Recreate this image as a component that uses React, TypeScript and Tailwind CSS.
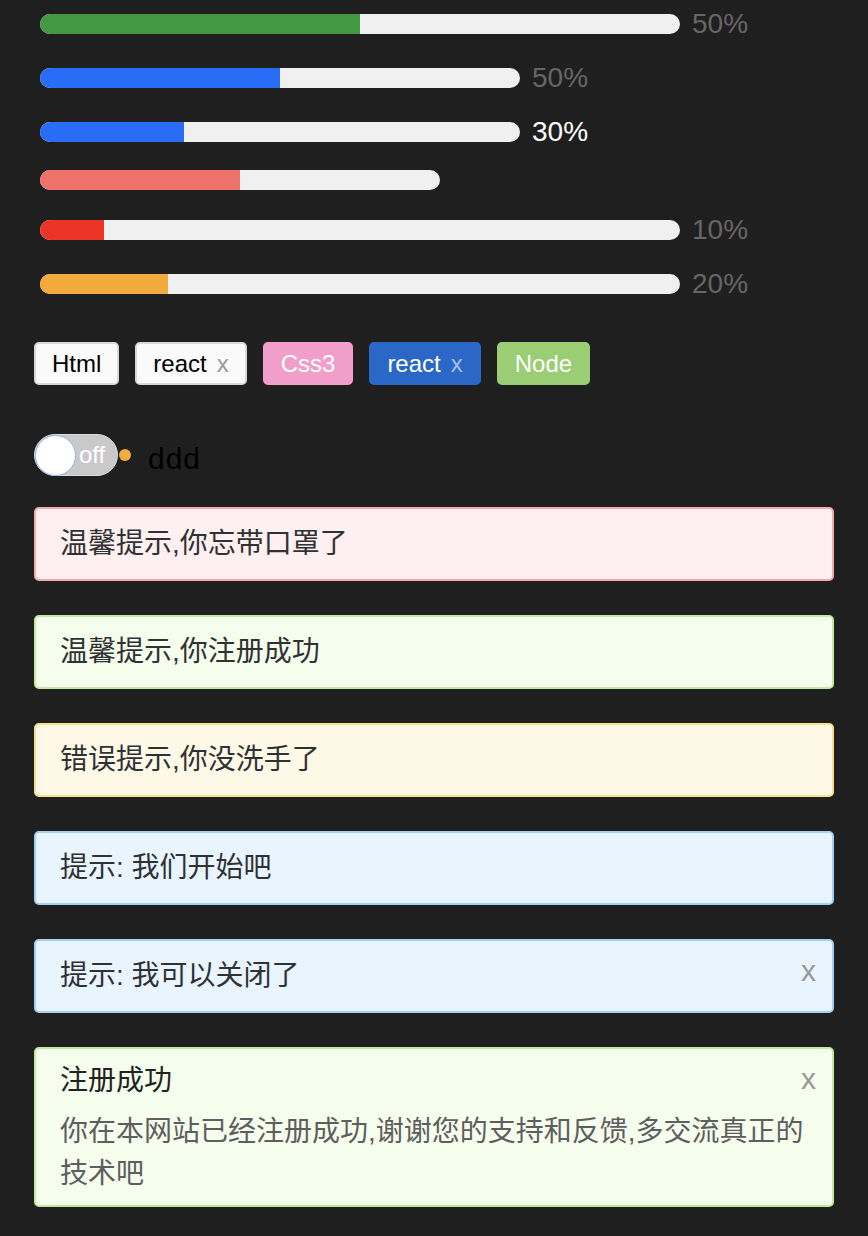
import React from 'react';

const font = { fontFamily: '"Liberation Sans", "Noto Sans CJK SC", sans-serif' };

function Bar({ width, percent, color, label, labelClass, className }: {
  width: string,
  percent: string,
  color: string,
  label?: string,
  labelClass?: string,
  className?: string
}) {
  return (
    <div className={`flex items-center h-[34px] ${className ?? ''}`}>
      <div className={`h-[20px] rounded-full bg-[#f0f0f0] overflow-hidden ${width}`}>
        <div className={`h-full ${percent} ${color}`} />
      </div>
      {label && <span className={`ml-[12px] text-[28px] leading-[34px] ${labelClass ?? 'text-[#666666]'}`}>{label}</span>}
    </div>
  );
}

function Alert({ text, tone, closable }: { text: string, tone: string, closable?: boolean }) {
  return (
    <div className={`relative border-2 rounded-[5px] pl-[24px] pr-[50px] py-[16px] text-[28px] leading-[38px] text-[#303133] ${tone}`}>
      {text}
      {closable && <span className="absolute right-[16px] top-[13px] text-[30px] leading-[34px] text-[#999999]">x</span>}
    </div>
  );
}

export default function App() {
  return (
    <div className="min-h-[1236px] bg-[#1f1f1f] pl-[34px] pr-[34px] pt-[7px] pb-[30px]" style={font}>
      {/* progress bars */}
      <div className="pl-[6px]">
        <Bar width="w-[640px]" percent="w-1/2" color="bg-[#43993f]" label="50%" />
        <Bar width="w-[480px]" percent="w-1/2" color="bg-[#296cf5]" label="50%" className="mt-[20px]" />
        <Bar width="w-[480px]" percent="w-[30%]" color="bg-[#296cf5]" label="30%" labelClass="text-white" className="mt-[20px]" />
        <Bar width="w-[400px]" percent="w-1/2" color="bg-[#ee716b]" className="mt-[14px]" />
        <Bar width="w-[640px]" percent="w-[10%]" color="bg-[#e93426]" label="10%" className="mt-[16px]" />
        <Bar width="w-[640px]" percent="w-[20%]" color="bg-[#f2aa3c]" label="20%" className="mt-[20px]" />
      </div>

      {/* tags */}
      <div className="flex gap-[16px] mt-[41px] text-[24px]">
        <span className="h-[43px] flex items-center px-[16px] border-2 border-[#d8d8d8] bg-[#fafafa] text-black rounded-[5px]">Html</span>
        <span className="h-[43px] flex items-center px-[16px] border-2 border-[#d8d8d8] bg-[#fafafa] text-black rounded-[5px]">
          react<span className="ml-[10px] text-[#999999]">x</span>
        </span>
        <span className="h-[43px] flex items-center px-[16px] border-2 border-[#f19ecb] bg-[#f19ecb] text-white rounded-[5px]">Css3</span>
        <span className="h-[43px] flex items-center px-[16px] border-2 border-[#2a67c6] bg-[#2a67c6] text-white rounded-[5px]">
          react<span className="ml-[10px] text-[#a4bfee]">x</span>
        </span>
        <span className="h-[43px] flex items-center px-[16px] border-2 border-[#9bcd75] bg-[#9bcd75] text-white rounded-[5px]">Node</span>
      </div>

      {/* switch */}
      <div className="flex items-center mt-[49px] h-[42px]">
        <div className="w-[84px] h-[42px] rounded-full bg-[#c9c9c9] border border-[#d9dde3] flex items-center">
          <div className="w-[41px] h-[41px] rounded-full bg-white border border-[#8cb7ea] shrink-0" />
          <span className="ml-[3px] text-[24px] leading-none text-white">off</span>
        </div>
        <span className="w-[12px] h-[12px] rounded-full bg-[#f1ad3d] ml-[1px]" />
        <span className="ml-[17px] mt-[6px] text-[30px] tracking-[1px] text-black">ddd</span>
      </div>

      {/* alerts */}
      <div className="flex flex-col gap-[34px] mt-[31px]">
        <Alert text="温馨提示,你忘带口罩了" tone="bg-[#fef0f0] border-[#f4a9a8]" />
        <Alert text="温馨提示,你注册成功" tone="bg-[#f5fdec] border-[#c3e8a0]" />
        <Alert text="错误提示,你没洗手了" tone="bg-[#fef8e7] border-[#f9df90]" />
        <Alert text="提示: 我们开始吧" tone="bg-[#e8f5ff] border-[#a3cff5]" />
        <Alert text="提示: 我可以关闭了" tone="bg-[#e8f5ff] border-[#a3cff5]" closable />
        <div className="relative border-2 rounded-[5px] pl-[24px] pr-[24px] pt-[16px] pb-[10px] bg-[#f5fdec] border-[#c3e8a0]">
          <div className="text-[28px] leading-[32px] text-[#222222]">注册成功</div>
          <div className="mt-[14px] text-[28px] leading-[42px] text-[#5e5e5e]">
            你在本网站已经注册成功,谢谢您的支持和反馈,多交流真正的技术吧
          </div>
          <span className="absolute right-[16px] top-[13px] text-[30px] leading-[34px] text-[#999999]">x</span>
        </div>
      </div>
    </div>
  );
}
